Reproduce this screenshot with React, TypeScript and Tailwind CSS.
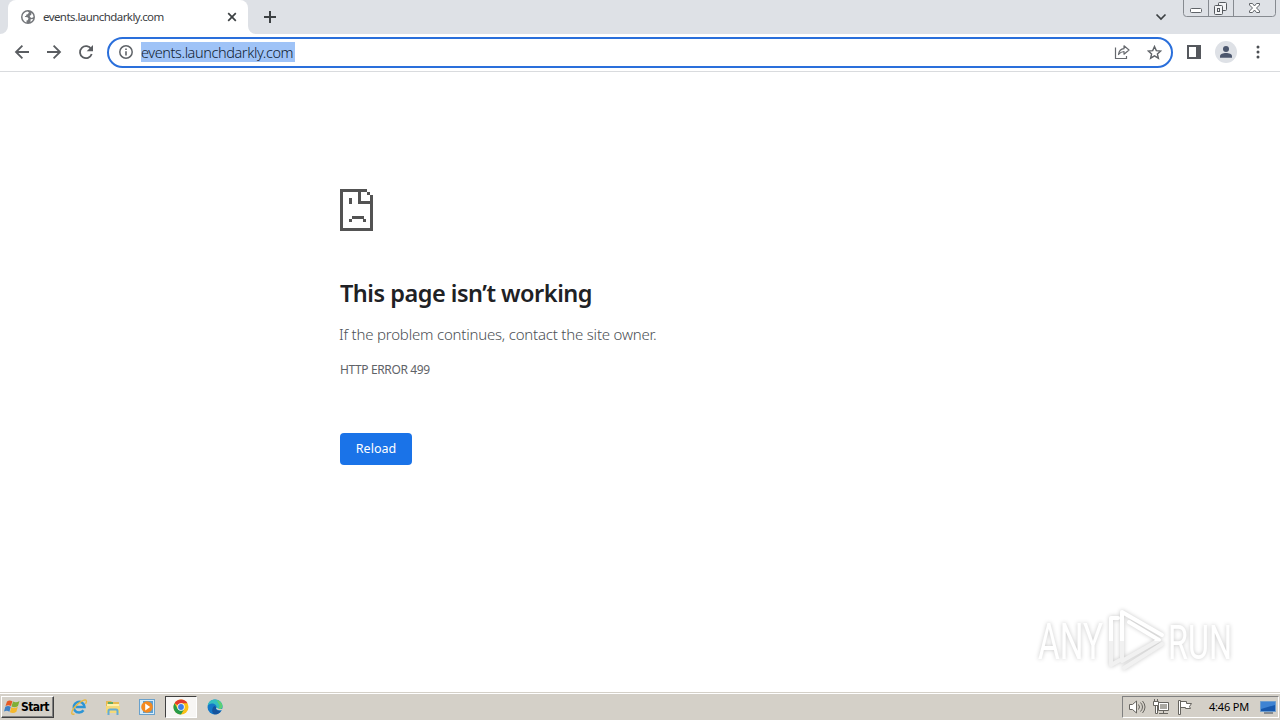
import type { ReactNode } from 'react'

const UI_FONT = "font-['Noto_Sans',sans-serif]"

function GlobeIcon() {
  return (
    <svg width="14" height="14" viewBox="0 0 14 14">
      <circle cx="7" cy="7" r="7" fill="#74777b" />
      <path d="M1.500 6.200C2 3.500 4 1.800 6.500 1.500L8 2.600 6.700 4.200 5.400 4.600 5.100 6H3.800L4.200 7l2.300.3 1 1.300-.8 1.700-1.200.3v1.800C3.200 11.800 1.300 9.500 1.500 6.200Z" fill="#fff" />
      <path d="M10.500 2.700a5.600 5.600 0 0 1 2 4.300l-1.700 1-1.500-.8-.7-1.400 1.600-.8ZM9.600 9.200l2.600-.3a5.600 5.600 0 0 1-2.700 3Z" fill="#fff" />
    </svg>
  )
}

function ArrowIcon({ flip = false }: { flip?: boolean }) {
  return (
    <svg width="16" height="16" viewBox="0 0 16 16" className={flip ? '-scale-x-100' : ''}>
      <path d="M15 8H2M8.400 1.700 2 8l6.400 6.300" fill="none" stroke="#5a5d61" strokeWidth="1.800" />
    </svg>
  )
}

function ReloadIcon() {
  return (
    <svg width="16" height="16" viewBox="0 0 16 16">
      <path d="M13.200 5.200A6 6 0 1 0 13.700 10" fill="none" stroke="#5a5d61" strokeWidth="1.800" />
      <path d="M15 1v6.300H8.700Z" fill="#5a5d61" />
    </svg>
  )
}

function CaptionButtons() {
  return (
    <svg width="93" height="17" viewBox="0 0 93 17" className="shrink-0">
      <path d="M.5 0v13.500a3 3 0 0 0 3 3h86a3 3 0 0 0 3-3V0M25.500 0v16M50.500 0v16" fill="#dee1e6" stroke="#868a90" />
      <rect x="7.500" y="8.500" width="11" height="4" rx="1" fill="#fff" stroke="#606469" />
      <g fill="#f2f3f5" stroke="#55595e">
        <rect x="35.500" y="2.500" width="8" height="8" rx="1" />
        <rect x="31.500" y="5.500" width="8" height="9" rx="1" />
        <rect x="34.500" y="8.500" width="2" height="3" />
      </g>
      <path d="M66.500 3.500h3l2 2.500 2-2.500h3v1.500L73.500 8l3 3v1.500h-3l-2-2.500-2 2.500h-3V11l3-3-3-3Z" fill="#fff" stroke="#606469" />
    </svg>
  )
}

function TabStrip() {
  return (
    <div className="flex h-[34px] shrink-0 bg-[#dee1e6] pl-2">
      <div className="relative flex h-full w-60 items-center rounded-t-lg bg-white pr-[11px] pl-[13px]">
        <svg className="absolute bottom-0 -left-2" width="8" height="8"><path d="M8 0v8H0a8 8 0 0 0 8-8" fill="#fff" /></svg>
        <svg className="absolute -right-2 bottom-0" width="8" height="8"><path d="M0 0v8h8a8 8 0 0 1-8-8" fill="#fff" /></svg>
        <GlobeIcon />
        <span className="ml-2 text-[11.500px] leading-4 tracking-[-0.57px] whitespace-nowrap text-[#3c4043]">events.launchdarkly.com</span>
        <svg className="ml-auto" width="10" height="10" viewBox="0 0 10 10">
          <path d="m1.200 1.200 7.600 7.600m0-7.600L1.200 8.800" stroke="#3c4043" strokeWidth="1.700" />
        </svg>
      </div>
      <svg className="mt-[11px] ml-4" width="12" height="12" viewBox="0 0 12 12">
        <path d="M6 0v12M0 6h12" stroke="#3c4043" strokeWidth="2" />
      </svg>
      <svg className="mt-[13px] ml-auto" width="12" height="8" viewBox="0 0 12 8">
        <path d="m1.500 1.500 4.500 4.500 4.500-4.500" fill="none" stroke="#3c4043" strokeWidth="1.700" />
      </svg>
      <div className="ml-4 pr-1">
        <CaptionButtons />
      </div>
    </div>
  )
}

function Toolbar() {
  return (
    <div className="flex h-[38px] shrink-0 items-center border-b border-[#d9dbde] bg-white pb-px pl-[14px]">
      <div className="flex w-[93px] gap-4">
        <ArrowIcon />
        <ArrowIcon flip />
        <ReloadIcon />
      </div>
      <div className="mt-px flex h-[31px] w-[1066px] items-center rounded-full border-2 border-[#2a6fdb] pr-[9px] pb-px pl-[10px]">
        <svg width="14" height="14" viewBox="0 0 14 14">
          <circle cx="7" cy="7" r="6.200" fill="none" stroke="#5f6368" strokeWidth="1.500" />
          <path d="M6.200 6.200h1.600v4.300H6.200ZM6.200 3.400h1.600V5H6.200Z" fill="#5f6368" />
        </svg>
        <span className="ml-2 h-5 w-[154px] bg-[#9fc3f7] text-[14.500px] leading-[20px] font-light tracking-[-0.4px] whitespace-nowrap text-[#101d32]">events.launchdarkly.com</span>
        <svg className="mr-[17px] ml-auto" width="16" height="16" viewBox="0 0 16 16" fill="none" stroke="#66696e" strokeWidth="1.200">
          <path d="M1.500 3.500v11h11V12" />
          <path d="M4.500 10.500C5 7 7 5 10 4.700V1.800l5 4.200-5 4.200V7.500C7.700 7.600 6 8.500 4.500 10.500Z" strokeLinejoin="round" />
        </svg>
        <svg width="15" height="15" viewBox="0 0 15 15">
          <path d="m7.500 1.500 1.800 4.100 4.400.4-3.300 2.900 1 4.300-3.900-2.300-3.900 2.300 1-4.300L1.300 6l4.400-.4Z" fill="none" stroke="#5f6368" strokeWidth="1.400" />
        </svg>
      </div>
      <svg className="ml-[14px]" width="14" height="14" viewBox="0 0 14 14">
        <path d="M1 1h12v12H1Z" fill="none" stroke="#55585d" strokeWidth="2" />
        <path d="M9 0h5v14H9Z" fill="#55585d" />
      </svg>
      <svg className="ml-[14px]" width="22" height="22" viewBox="0 0 22 22">
        <circle cx="11" cy="11" r="11" fill="#dee1e6" />
        <circle cx="11" cy="8" r="3" fill="#4b566d" />
        <path d="M5 16.800v-1.500c0-2 3-3.200 6-3.200s6 1.200 6 3.200v1.500Z" fill="#4b566d" />
      </svg>
      <svg className="ml-[19px]" width="4" height="14" viewBox="0 0 4 14" fill="#4b4e53">
        <circle cx="2" cy="2" r="1.500" />
        <circle cx="2" cy="7" r="1.500" />
        <circle cx="2" cy="12" r="1.500" />
      </svg>
    </div>
  )
}

function SadPageIcon() {
  return (
    <svg width="33" height="42" viewBox="0 0 11 14" fill="#535353" shapeRendering="crispEdges">
      <path d="M0 0h9v1H7v3h4v10H0ZM1 1v12h9V5H6V1Z" fillRule="evenodd" />
      <path d="M9 1h1v1H9ZM10 2h1v2h-1ZM3 3h1v2H3ZM4 9h4v1H4ZM3 10h1v1H3ZM8 10h.500v1H7.500v-1Z" />
    </svg>
  )
}

function Watermark() {
  return (
    <div className="absolute right-[40px] bottom-[20px] drop-shadow-[0_0_2px_rgba(0,0,0,0.22)]">
      <svg width="210" height="64" viewBox="0 0 210 64" className="overflow-visible">
        <defs>
          <linearGradient id="mark" x1="0" y1="0" x2="0" y2="64" gradientUnits="userSpaceOnUse">
            <stop offset="0.520" stopColor="#fff" />
            <stop offset="0.520" stopColor="#f1f1f1" />
          </linearGradient>
        </defs>
        <g fill="url(#mark)" fontFamily="Roboto, sans-serif" fontSize="49">
          <text transform="translate(8 51) scale(.68 1)">ANY</text>
          <text transform="translate(138 51) scale(.66 1)">RUN</text>
        </g>
        <g fill="none" stroke="url(#mark)" strokeWidth="4" strokeLinejoin="round" strokeLinecap="round">
          <path d="M92 50V4l40 23M99 14l30 18-37 21M88 10h-7v47l9-5M132 36 94 60" />
        </g>
      </svg>
    </div>
  )
}

function ErrorPage() {
  return (
    <main className="relative flex flex-1 flex-col items-start bg-white pt-[117px] pl-[340px]">
      <SadPageIcon />
      <h1 className="mt-[44px] text-[23.500px] leading-[36px] font-semibold tracking-[-0.5px] text-[#202124]">This page isn’t working</h1>
      <p className="mt-[12px] -ml-px text-[15px] leading-[22px] font-light tracking-[-0.2px] text-[#4b4f54]">If the problem continues, contact the site owner.</p>
      <p className="mt-[17px] text-[12px] leading-4 tracking-[-0.38px] text-[#5f6368]">HTTP ERROR 499</p>
      <button className="mt-[55px] h-8 w-[72px] rounded-[4px] bg-[#1a73e8] text-[12.500px] leading-8 text-white">Reload</button>
      <Watermark />
    </main>
  )
}

function TaskItem({ children, active = false }: { children: ReactNode; active?: boolean }) {
  return (
    <div className={active ? 'flex h-[22px] w-8 items-center justify-center border border-[#fff] border-t-[#404040] border-l-[#404040] bg-[#f7f6f4]' : 'flex h-[22px] w-8 items-center justify-center'}>
      {children}
    </div>
  )
}

function Taskbar() {
  return (
    <div className="flex h-[28px] shrink-0 items-center border-t border-[#d4d0c8] bg-[#d4d0c8] pt-px shadow-[inset_0_1px_0_#fff]">
      <div className="ml-px flex h-[22px] w-[53px] items-center border border-[#404040] border-t-white border-l-white pl-[2px] shadow-[inset_-1px_-1px_0_#808080]">
        <svg width="16" height="16" viewBox="0 0 16 16" className="shrink-0">
          <path d="M3 2.500C5 .9 6.500 1.200 8.400 2.200L7 7C5 5.800 3.500 5.900 1.500 7Z" fill="#e55a25" />
          <path d="M9 2.500c2.200 1.200 4.200 1 6.500-.5L14 7c-2.400 1.600-4.500 1.500-6.500.4Z" fill="#7faf36" />
          <path d="M1.300 7.800C3.200 6.600 5 6.700 6.800 7.800L5.400 12.700C3.500 11.500 2 11.500 0 12.600Z" fill="#3e80c5" />
          <path d="M7.300 8.200c2.200 1.100 4.200 1 6.500-.5l-1.400 5.100c-2.300 1.500-4.400 1.500-6.500.4Z" fill="#f5b82d" />
        </svg>
        <span className="ml-px font-['DejaVu_Sans_Condensed','DejaVu_Sans',sans-serif] text-[12px] font-bold tracking-[-0.6px] text-black">Start</span>
      </div>
      <div className="ml-[9px] flex gap-[2px]">
        <TaskItem>
          <svg width="18" height="18" viewBox="0 0 18 18" fill="none">
            <path d="M13.500 12.300A5.400 5.400 0 1 1 14.500 9H5.500" stroke="#2d95d5" strokeWidth="2.500" />
            <path d="M4.500 15.800C1 17.500.6 14 4.500 9.200 9 3.700 15.500.6 16.300 2.500c.5 1-.1 2.300-.8 3.300" stroke="#e8b942" strokeWidth="1.400" />
          </svg>
        </TaskItem>
        <TaskItem>
          <svg width="16" height="17" viewBox="0 0 16 17">
            <path d="M1 2h5l1 1h7v11H1Z" fill="#e7ba50" />
            <path d="M3 3h5v3H3Z" fill="#62aa61" />
            <path d="M2 5h12v3H2Z" fill="#fff1aa" />
            <path d="M1 7h14v7H1Z" fill="#f5d978" />
            <path d="M3.500 16v-4q0-1.500 1.500-1.500h6q1.500 0 1.500 1.500v4" fill="none" stroke="#64acd4" strokeWidth="2" />
          </svg>
        </TaskItem>
        <TaskItem>
          <svg width="16" height="16" viewBox="0 0 16 16">
            <rect x=".5" y=".5" width="15" height="15" fill="#d6edfb" stroke="#69a1cc" />
            <rect x="4" y="2" width="10" height="12" fill="#5b9fd3" />
            <circle cx="8" cy="8" r="5.800" fill="#f48a20" />
            <path d="m6.200 4.500 5 3.500-5 3.500Z" fill="#fff" />
          </svg>
        </TaskItem>
        <TaskItem active>
          <svg width="16" height="16" viewBox="0 0 16 16">
            <circle cx="8" cy="8" r="7.500" fill="#fbc116" />
            <path d="M8 8 1.500 4.250a7.500 7.500 0 0 1 13 0H8Z" fill="#e33b2e" />
            <path d="M1.500 4.250A7.500 7.500 0 0 0 8 15.500L11.200 9.900 4.800 9.900Z" fill="#279b49" />
            <circle cx="8" cy="8" r="3.700" fill="#fff" />
            <circle cx="8" cy="8" r="2.900" fill="#3f7ee8" />
          </svg>
        </TaskItem>
        <TaskItem>
          <svg width="16" height="16" viewBox="0 0 16 16">
            <circle cx="8" cy="8" r="7.500" fill="#1478c8" />
            <path d="M.6 7C1.300 2.500 4.300.5 8 .5c4.500 0 7.500 3.200 7.500 6.500 0 2.600-2.200 3.500-4 3.500-1.600 0-2.600-.6-2.100-1.500C10.300 6.500 7.500 4.500 5 4.500 3 4.500 1.200 5.500.6 7Z" fill="#35bfc0" />
            <path d="M9.500 1c4 1 6 3.500 6 6 0 2.600-2.200 3.500-4 3.500l1-4Z" fill="#5bd076" />
            <path d="M9.500 8.500c-1.300 1-.3 4 4.300 3.400C12 15 9 15.800 6.600 15 4 12 5.500 8 7.500 7Z" fill="#15539c" />
            <path d="M9.300 8.500c-.8 1.300 1.200 3.300 5.200 2.500l1.500 2V10h-4Z" fill="#d4d0c8" />
          </svg>
        </TaskItem>
      </div>
      <div className="mr-px ml-auto flex h-[22px] w-[157px] items-center border border-white border-t-[#808080] border-l-[#808080] pl-[6px]">
        <svg width="17" height="16" viewBox="0 0 17 16" fill="#fff" stroke="#66645f">
          <path d="M.5 5.500h3L7.500 2v12l-4-3.500h-3Z" />
          <path d="M9.500 5.500q2 2.500 0 5M11.500 3.500q4 4.500 0 9M13.500 2q5 6 0 12" fill="none" />
        </svg>
        <svg className="ml-[7px]" width="16" height="16" viewBox="0 0 16 16" fill="#fff" stroke="#66645f">
          <path d="M5.500 3.500h10v8h-10Z" />
          <path d="M7 5h7v5H7Z" fill="#aaa8a2" stroke="none" />
          <path d="M.5 2.500h5v4h-5ZM1.500 0v2M4.500 0v2M2.500 7v7.500h2V7M6 14.500h9M10.500 12v2" />
        </svg>
        <svg className="ml-[8px]" width="16" height="16" viewBox="0 0 16 16" fill="#fff" stroke="#66645f">
          <path d="M1.500 1.500h2v14h-2ZM3.500 2.500h6v2h5l-2 3 1 2h-5v-1h-5Z" />
        </svg>
        <span className="ml-4 text-[11px] leading-4 tracking-[-0.2px] whitespace-nowrap text-black">4:46 PM</span>
        <svg className="mr-[2px] ml-auto" width="16" height="14" viewBox="0 0 16 14">
          <path d="M.5 1.500h15v10H.5Z" fill="#1758ad" stroke="#6d9dce" />
          <path d="M1 2h14v3L1 9Z" fill="#3e83d3" />
          <path d="M4 13h9" stroke="#37465a" />
        </svg>
      </div>
    </div>
  )
}

export default function App() {
  return (
    <div className={`flex h-[720px] w-[1280px] flex-col overflow-hidden bg-white ${UI_FONT}`}>
      <TabStrip />
      <Toolbar />
      <ErrorPage />
      <Taskbar />
    </div>
  )
}
